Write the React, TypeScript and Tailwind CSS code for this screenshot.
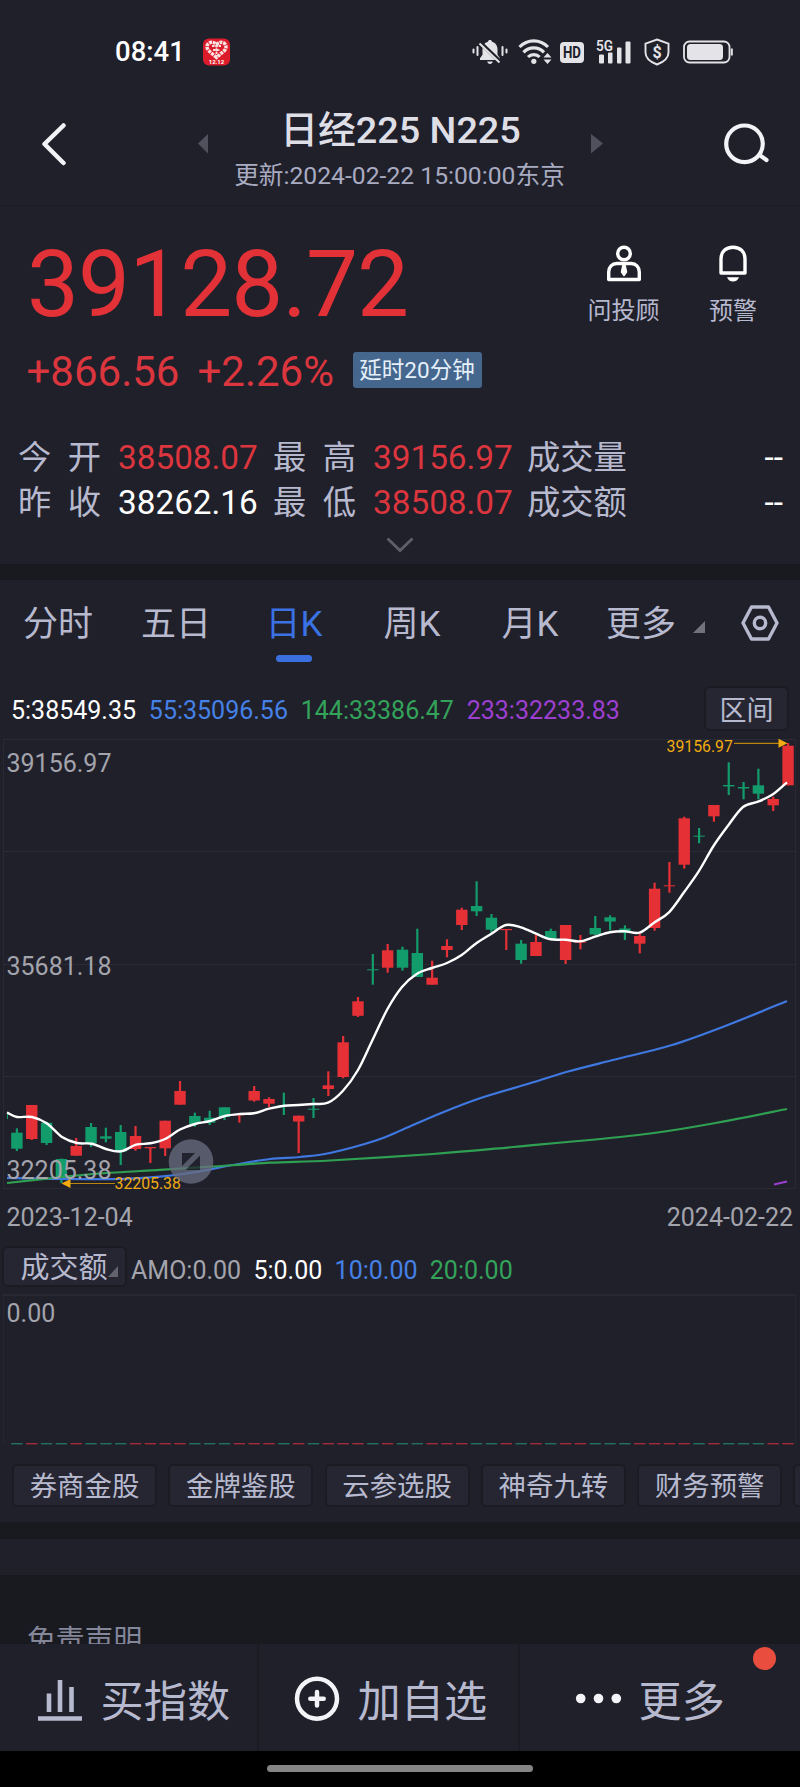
import clsx from 'clsx';

type Candle = [up: boolean, high: number, top: number, bottom: number, low: number];

// up, high, body top, body bottom, low (chart space)
const candles: Candle[] = [
  [false, 1128.3, 1132.7, 1148.7, 1151],
  [true, 1105, 1105, 1139, 1140],
  [false, 1121.7, 1122.7, 1143, 1145],
  [false, 1158.5, 1159, 1179, 1183],
  [true, 1138, 1146, 1155.7, 1155.7],
  [false, 1123, 1127, 1143.3, 1147],
  [false, 1127.7, 1136.3, 1138.7, 1142.3],
  [false, 1125, 1132, 1151.7, 1165],
  [true, 1126, 1136, 1149, 1150.7],
  [true, 1147, 1147, 1148.3, 1163],
  [true, 1120.7, 1120.7, 1148.3, 1156],
  [true, 1081, 1091, 1104.7, 1104.7],
  [false, 1112.7, 1116, 1124, 1126.7],
  [false, 1110.7, 1117.7, 1122.7, 1125],
  [false, 1107.3, 1107.3, 1117, 1120],
  [true, 1114, 1114, 1115.3, 1122.7],
  [true, 1086, 1091, 1100.5, 1101.7],
  [true, 1097.3, 1099, 1103.7, 1107],
  [false, 1092.7, 1105, 1106, 1115],
  [true, 1115.5, 1115.7, 1121.5, 1153],
  [false, 1098, 1108.7, 1109.7, 1118],
  [true, 1071.3, 1085.3, 1089, 1096],
  [true, 1036, 1042.3, 1077, 1078.3],
  [true, 997, 1001.3, 1015.8, 1017],
  [false, 954, 969.3, 970.3, 984.7],
  [true, 944, 950.3, 967.7, 972.7],
  [false, 946.7, 949.7, 967.7, 970.7],
  [false, 928.7, 953, 977, 977],
  [true, 960.7, 977.7, 984.7, 984.7],
  [true, 939.3, 946, 950, 957.3],
  [true, 907.7, 909.7, 925, 930],
  [false, 881.3, 906, 911.3, 916],
  [false, 914, 917.7, 929.7, 932.7],
  [true, 929, 929, 930.2, 950],
  [false, 940, 943.7, 960, 963.7],
  [true, 935, 942, 956, 956],
  [false, 928.7, 931, 939, 940],
  [true, 925, 925, 960, 964],
  [true, 935, 941.7, 942.7, 949.3],
  [false, 916, 928, 934.5, 935],
  [false, 915.3, 917.3, 921.5, 930.3],
  [false, 925.3, 928.5, 932.7, 940],
  [true, 933.3, 936, 943.7, 953.3],
  [true, 882.7, 888.7, 928, 930.7],
  [true, 862, 885.3, 886.3, 892.7],
  [true, 816.7, 818.3, 864.7, 868.7],
  [false, 828, 835.7, 836.7, 843.3],
  [true, 805, 805, 816.3, 821.7],
  [false, 762.3, 785, 786.4, 795],
  [false, 782, 787, 788.5, 799.3],
  [false, 768.7, 785.3, 793.7, 799.3],
  [true, 796.7, 799, 805.3, 811],
  [true, 743, 745.7, 785.3, 785.3],
];

const candleX = (i: number) => 16.9 + i * 14.83;

const ma5: number[][] = [
  [7, 1112.5], [17, 1117], [32, 1117], [47, 1123.5], [62, 1137], [77, 1143], [92, 1143.7], [106, 1149],
  [121, 1151.3], [136, 1144.7], [150.5, 1143.3], [165, 1139], [180, 1129.5], [195, 1124], [210, 1121],
  [225, 1116], [240, 1114], [254, 1113.3], [269, 1108.7], [284, 1105.7], [298.5, 1105], [313, 1104],
  [328, 1102.7], [343, 1090.7], [358, 1070], [372.5, 1040], [387.5, 1009], [402, 987], [417, 973.7],
  [432, 968], [447, 963], [461.7, 955], [476, 943.5], [491, 934], [506, 925], [521, 927.3], [536, 933.7],
  [550.5, 939.3], [565.5, 939.7], [580, 941.3], [595, 936.7], [610, 932.3], [624.5, 931.3], [639.5, 932.7],
  [654, 922.7], [669, 912.3], [684, 892.3], [698.5, 871.7], [713.5, 846], [728, 825.7], [743, 807],
  [758, 801.7], [773, 794.3], [787, 782.3],
];

const ma55: number[][] = [
  [7, 1178], [62, 1179], [120, 1179], [160, 1176.7], [193, 1172.5], [233, 1165], [270, 1159], [300, 1157],
  [330, 1153], [376, 1140.5], [403, 1129.5], [440, 1113.5], [480, 1098.3], [530, 1083.3], [570, 1071],
  [615, 1059.5], [672, 1045], [729, 1024.5], [787, 1001],
];

const ma144: number[][] = [
  [7, 1183], [62, 1177], [100, 1173.5], [160, 1169.8], [210, 1166.7], [270, 1162.7], [330, 1160.5],
  [433, 1154], [513, 1147], [638, 1135], [707, 1124.5], [787, 1109],
];

// Catmull-Rom through the points
function smooth(p: number[][]) {
  let d = `M${p[0][0]} ${p[0][1]}`;
  for (let i = 0; i < p.length - 1; i++) {
    const a = p[i - 1] ?? p[i];
    const b = p[i];
    const c = p[i + 1];
    const e = p[i + 2] ?? c;
    d += `C${b[0] + (c[0] - a[0]) / 6} ${b[1] + (c[1] - a[1]) / 6} ${c[0] - (e[0] - b[0]) / 6} ${c[1] - (e[1] - b[1]) / 6} ${c[0]} ${c[1]}`;
  }
  return d;
}

function StatusBar() {
  return (
    <div className="flex h-[102px] items-center pl-[115px] pt-[2px] text-[#e4e4e8]">
      <span className="w-[88px] text-[27.5px] font-medium leading-[40px] text-white">08:41</span>
      <svg width="27" height="28" viewBox="0 0 27 28">
        <rect y="0.5" width="27" height="27" rx="6" fill="#dc1c2a" />
        <path
          d="M13.500 19.500 L5.500 12.500 Q2.500 8.500 5.500 5.500 Q9 2.500 13.500 6.500 Q18 2.500 21.500 5.500 Q24.500 8.500 21.500 12.500 Z"
          fill="none"
          stroke="#fbe3e3"
          strokeWidth="3.500"
          strokeDasharray="3 0.8"
        />
        <path d="M9 8h9M10 12h7M13.500 7v11" stroke="#fbe3e3" strokeWidth="1.800" strokeDasharray="2.500 0.8" />
        <text x="13.500" y="25.500" textAnchor="middle" fontSize="6" fontWeight="700" fill="#fff">12.12</text>
      </svg>

      {/* muted bell */}
      <svg className="ml-[242px]" width="36" height="28" viewBox="0 0 36 28" fill="currentColor">
        <path d="M18 2c1.200 0 1.800.7 2 1.700 3.400 1 5.500 3.800 5.500 7.500v5.500l2.500 3.600v1.700H8v-1.700l2.500-3.600v-5.500c0-3.700 2.100-6.500 5.500-7.500.2-1 .8-1.700 2-1.700z" />
        <path d="M15.200 23.500h5.600c-.3 1.500-1.400 2.500-2.800 2.500s-2.500-1-2.800-2.500z" />
        <path d="M7 3.500l22 21" stroke="#20202b" strokeWidth="4" />
        <path d="M7.500 5.500l20 19" stroke="currentColor" strokeWidth="2" />
        <path d="M1.500 11.500v3M5.500 9v8M30.500 9v8M34.500 11.500v3" stroke="currentColor" strokeWidth="2" strokeLinecap="round" />
      </svg>

      {/* wifi */}
      <svg className="ml-[10px]" width="34" height="28" viewBox="0 0 34 28" fill="none" stroke="currentColor" strokeWidth="3.200">
        <path d="M1.500 9C9.500 .8 22 .8 30 9" />
        <path d="M5.500 14.300c5.500-6 15-6 20.500 0" />
        <path d="M10 19c3.200-3.300 8.400-3.300 11.600 0" />
        <circle cx="15.800" cy="23.300" r="2.600" fill="currentColor" stroke="none" />
        <path d="M25.500 19.500l4-4.500 4 4.500zM25.500 21.500l4 4.500 4-4.500z" fill="currentColor" stroke="none" />
      </svg>

      <span className="ml-[8px] flex h-[21px] w-6 items-center justify-center rounded-[4px] bg-[#e4e4e8]">
        <svg className="overflow-visible" width="24" height="21" viewBox="0 0 24 21">
          <text x="3" y="16.300" textLength="18" lengthAdjust="spacingAndGlyphs" fontSize="16.500" fontWeight="700" fill="#20202b">HD</text>
        </svg>
      </span>

      {/* 5G signal */}
      <svg className="ml-[12px]" width="36" height="28" viewBox="0 0 36 28" fill="currentColor">
        <text x="0" y="12.800" fontSize="15.500" fontWeight="600" textLength="17" lengthAdjust="spacingAndGlyphs">5G</text>
        <rect x="3" y="16.500" width="5" height="9" rx="1" />
        <rect x="12" y="14.500" width="4.500" height="11" rx="1" />
        <rect x="21" y="9.500" width="4.500" height="16" rx="1" />
        <rect x="29.500" y="3.500" width="5" height="22" rx="1" />
      </svg>

      {/* shield */}
      <svg className="ml-[12px]" width="26" height="28" viewBox="0 0 26 28" fill="none" stroke="currentColor" strokeWidth="1.900">
        <path d="M13 1.500l11.500 4.200v8.800c0 5.500-4.800 9.500-11.500 12-6.700-2.500-11.500-6.500-11.500-12V5.700z" />
        <text x="13" y="19.500" textAnchor="middle" fontSize="16" fontWeight="700" fill="currentColor" stroke="none">$</text>
      </svg>

      {/* battery */}
      <svg className="ml-[13px]" width="50" height="24" viewBox="0 0 50 24" fill="none">
        <rect x="1" y="1.500" width="45.500" height="21" rx="5.500" stroke="currentColor" strokeWidth="1.800" />
        <rect x="4" y="4" width="36" height="16" rx="3.500" fill="currentColor" />
        <path d="M48.800 8.500v7" stroke="currentColor" strokeWidth="2" />
      </svg>
    </div>
  );
}

function Header() {
  return (
    <header className="flex h-[104px] items-start border-b border-[#1c1c26]">
      <svg className="ml-[41px] mt-5" width="26" height="44" viewBox="0 0 26 44" fill="none" stroke="#f2f2f7" strokeWidth="4.500" strokeLinecap="round" strokeLinejoin="round">
        <path d="M22.500 3.500L3.500 22l19 19" />
      </svg>
      <svg className="ml-[131px] mt-8" width="10" height="20" viewBox="0 0 10 20">
        <path d="M0 9.500L10 0v19.500z" fill="#50515d" />
      </svg>
      <div className="flex-1 text-center">
        <h1 className="ml-[2px] mt-[6px] text-[37.800px] font-medium leading-[44px] text-[#dedee6]">日经225 N225</h1>
        <p className="mt-[2px] text-[24.700px] leading-[44px] text-[#a9abc0]">更新:2024-02-22 15:00:00东京</p>
      </div>
      <svg className="mt-8" width="12" height="20" viewBox="0 0 12 20">
        <path d="M12 9.500L0 0v19.500z" fill="#50515d" />
      </svg>
      <svg className="ml-[120px] mr-[29px] mt-5" width="48" height="44" viewBox="0 0 48 44" fill="none" stroke="#f2f2f7" strokeWidth="4.200" strokeLinecap="round">
        <circle cx="21.500" cy="21.800" r="18.300" />
        <path d="M36.500 33l7 5" />
      </svg>
    </header>
  );
}

function Quote({ label, value, tone }: { label: string; value: string; tone: string }) {
  return (
    <div className="flex">
      <div className="mr-[17px] flex w-[83px] justify-between text-[#b7b9ce]">
        <span>{label[0]}</span>
        <span>{label[1]}</span>
      </div>
      <span className={tone}>{value}</span>
    </div>
  );
}

function Summary() {
  return (
    <section className="h-[358px] pt-[33px]">
      <div className="flex justify-between">
        <div>
          <div className="ml-[27px] text-[92.500px] leading-[92px] tracking-[-0.9px] text-[#e23137]">39128.72</div>
          <div className="mt-[21px] flex h-10 items-start pl-[26.500px] text-[42px] leading-10 text-[#db353e]">
            <span className="w-[171px]">+866.56</span>
            <span className="w-[155px]">+2.26%</span>
            <span className="flex h-9 w-[129px] items-center justify-center rounded-[3px] bg-[#45678d] text-[22.500px] leading-9 text-[#e6f0fb]">
              延时20分钟
            </span>
          </div>
        </div>
        <div className="flex pr-[43px] pt-[4px] text-[24px] leading-8 text-[#b7b9ce]">
          <div className="flex w-[73px] flex-col items-center">
            <svg width="36" height="40" viewBox="0 0 36 40" fill="none" stroke="#fff" strokeWidth="3.400" strokeLinejoin="round">
              <circle cx="18" cy="10.500" r="6.300" />
              <path d="M2.700 36.500V29c0-5 3.500-8.500 8-8.500h14.600c4.500 0 8 3.500 8 8.500v7.500z" />
              <path d="M17 22l-1.500 7 2.500 3.500 2.500-3.500-1.500-7z" fill="#fff" strokeWidth="1.500" />
            </svg>
            <span className="mt-[12px] whitespace-nowrap">问投顾</span>
          </div>
          <div className="ml-[49px] flex w-[48px] flex-col items-center">
            <svg width="30" height="40" viewBox="0 0 30 40" fill="none" stroke="#fff" strokeWidth="3.400" strokeLinejoin="round">
              <path d="M3 30V16C3 8.500 8 4.200 15 4.200S27 8.500 27 16v14z" />
              <path d="M9 34.200h12c-1 2.800-3.200 4.300-6 4.300s-5-1.500-6-4.300z" fill="#fff" stroke="none" />
            </svg>
            <span className="mt-[12px] whitespace-nowrap">预警</span>
          </div>
        </div>
      </div>

      <div className="mt-[43px] grid grid-cols-[255px_254px_1fr] pl-[18px] pr-[17px] text-[33.300px] leading-[45px]">
        <Quote label="今开" value="38508.07" tone="text-[#db353e]" />
        <Quote label="最高" value="39156.97" tone="text-[#db353e]" />
        <div className="flex justify-between text-[#b7b9ce]">
          成交量<span className="text-white">--</span>
        </div>
        <Quote label="昨收" value="38262.16" tone="text-white" />
        <Quote label="最低" value="38508.07" tone="text-[#db353e]" />
        <div className="flex justify-between text-[#b7b9ce]">
          成交额<span className="text-white">--</span>
        </div>
      </div>
      <svg className="mx-auto mt-[12px]" width="30" height="17" viewBox="0 0 30 17" fill="none" stroke="#5e5f6a" strokeWidth="2.800">
        <path d="M2.500 1.500L15 13.500l12.500-12" />
      </svg>
    </section>
  );
}

function Tabs() {
  return (
    <nav className="flex h-[86px] items-center text-[35px] leading-[50px] text-[#b7b9ce]">
      {['分时', '五日', '日K', '周K', '月K'].map((tab) => (
        <div key={tab} className={clsx('relative w-[118px] pr-[2px] pt-[3px] text-center', tab === '日K' && 'text-[#3a72e4]')}>
          {tab}
          {tab === '日K' && <span className="absolute -bottom-[12px] left-[40px] h-[7px] w-[36px] rounded-full bg-[#3a6fe0]" />}
        </div>
      ))}
      <div className="w-[103px] pr-[1px] pt-[3px] text-center">更多</div>
      <svg className="mt-2" width="12" height="12" viewBox="0 0 12 12">
        <path d="M12 0v12H0z" fill="#71727c" />
      </svg>
      <svg className="ml-[36px]" width="38" height="36" viewBox="0 0 38 36" fill="none" stroke="#b7b9ce" strokeWidth="3.400" strokeLinejoin="round">
        <path d="M10.500 2h17L36 18l-8.500 16h-17L2 18z" />
        <circle cx="19" cy="18" r="5.700" />
      </svg>
    </nav>
  );
}

function PriceChart() {
  return (
    <svg className="block overflow-visible" width="800" height="451" viewBox="0 739 800 451" fill="none">
      {[739.5, 851.5, 964.5, 1076.500, 1188.5].map((y) => (
        <path key={y} d={`M3 ${y}H795`} stroke="#2b2b37" />
      ))}
      <path d="M3.500 739V1188M795.500 739V1188" stroke="#292934" />

      <path d="M7.500 1113V1119" stroke="#139c6b" strokeWidth="1" />
      {candles.map(([up, high, top, bottom, low], i) => (
        <g key={i} fill={up ? '#e53036' : '#139c6b'}>
          <rect x={candleX(i) - 1.1} y={high} width="2.200" height={low - high} />
          <rect x={candleX(i) - 5.7} y={top} width="11.400" height={bottom - top} />
        </g>
      ))}

      <path d={smooth(ma55)} stroke="#3f78e0" strokeWidth="2.200" />
      <path d={smooth(ma144)} stroke="#2fa052" strokeWidth="2.200" />
      <path d="M774 1184.500L787 1181.500" stroke="#9b3fd0" strokeWidth="2" />
      <path d={smooth(ma5)} stroke="#fff" strokeWidth="2.400" />

      <g fill="#a3a4ac" fontSize="25">
        <text x="6.500" y="771.500">39156.97</text>
        <text x="6.500" y="974.500">35681.18</text>
        <text x="6.500" y="1178.500">32205.38</text>
      </g>

      <g fill="#f2ac10" stroke="none" fontSize="15.800">
        <text x="666.500" y="752">39156.97</text>
        <path d="M734 743.300h45" stroke="#b98410" strokeWidth="1.200" />
        <path d="M778.500 738.800l9 4.500-9 4.500z" />
        <text x="114.500" y="1189.300">32205.38</text>
        <path d="M70 1183.500h45" stroke="#b98410" strokeWidth="1.200" />
        <path d="M70.500 1179l-9 4.500 9 4.500z" />
      </g>

      <g opacity="0.75">
        <circle cx="191" cy="1161.500" r="22.300" fill="#6a6e80" />
        <path d="M182 1153h13l-13 13zM200 1155.500v14.500h-14.500z" fill="#22232e" />
      </g>
    </svg>
  );
}

function VolumeChart() {
  return (
    <svg className="block" width="800" height="164" viewBox="0 1286 800 164" fill="none">
      <path d="M3 1295H795" stroke="#2b2b37" strokeWidth="1.500" />
      <path d="M3.500 1295V1444M795.500 1295V1444" stroke="#272732" />
      <text x="6.500" y="1321.500" fontSize="25" fill="#a3a4ac">0.00</text>
      {candles.map(([up], i) => (
        <rect key={i} x={candleX(i) - 5.7} y="1443" width="11.400" height="1.400" fill={up ? '#a12c3a' : '#24705f'} />
      ))}
    </svg>
  );
}

function ChartPanel() {
  return (
    <section className="h-[942px]">
      <Tabs />
      <div className="flex h-[73px] items-start pl-[11px] pr-[11px] pt-[20px] text-[25px] leading-[50px]">
        <div className="flex flex-1 gap-[12.800px]">
          <span className="text-white">5:38549.35</span>
          <span className="text-[#4581e6]">55:35096.56</span>
          <span className="text-[#34a35a]">144:33386.47</span>
          <span className="text-[#9d3fd0]">233:32233.83</span>
        </div>
        <button className="h-[45px] w-[85px] rounded-[6px] border-2 border-[#1b1b24] bg-[#252632] pt-[3px] text-[27px] leading-[41px] text-[#b7b9ce]">
          区间
        </button>
      </div>
      <PriceChart />
      <div className="flex h-[54px] items-center justify-between pl-[6.500px] pr-[7px] pt-[2px] text-[25px] text-[#a3a4ac]">
        <span>2023-12-04</span>
        <span>2024-02-22</span>
      </div>
      <div className="flex h-[42px] items-start pl-[2px] pt-[2px] text-[25px] leading-[50px]">
        <button className="flex h-[41px] w-[125px] items-center rounded-[6px] border-2 border-[#1b1b24] bg-[#252632] pl-[16.500px] pt-[3px] text-[29px] leading-[36px] text-[#b7b9ce]">
          成交额
          <svg className="mt-[7px]" width="10" height="11" viewBox="0 0 10 11">
            <path d="M10 0v11H0z" fill="#62636d" />
          </svg>
        </button>
        <div className="ml-[4px] flex gap-[12.300px]">
          <span className="text-[#a3a4ac]">AMO:0.00</span>
          <span className="text-white">5:0.00</span>
          <span className="text-[#4581e6]">10:0.00</span>
          <span className="text-[#34a35a]">20:0.00</span>
        </div>
      </div>
      <VolumeChart />
      <div className="mt-[14px] flex gap-[11.300px] overflow-hidden pl-[12px]">
        {['券商金股', '金牌鉴股', '云参选股', '神奇九转', '财务预警', ''].map((item) => (
          <button
            key={item}
            className="h-[43px] w-[145px] shrink-0 rounded-[5px] border-2 border-[#1b1b24] bg-[#252632] pt-[2px] text-[27.400px] leading-[39px] text-[#b7b9ce]"
          >
            {item}
          </button>
        ))}
      </div>
    </section>
  );
}

function BottomBar() {
  return (
    <footer>
      <div className="flex h-[107px] items-start bg-[#20202b] text-[43.200px] leading-[62px] text-[#b7b9ce]">
        <div className="flex h-full w-[259px] border-r-2 border-[#1b1b24] pl-[37px] pt-7">
          <svg className="mt-2" width="46" height="42" viewBox="0 0 46 42" stroke="#b7b9ce" strokeWidth="4.600">
            <path d="M12 13.500V32M23 0V32M34.500 7V32M1 38.500H45" />
          </svg>
          <span className="ml-[17.500px]">买指数</span>
        </div>
        <div className="flex h-full w-[261px] border-r-2 border-[#1b1b24] pl-[35px] pt-7">
          <svg className="mt-[4px]" width="46" height="46" viewBox="0 0 46 46" fill="none" stroke="#f3f3f8" strokeWidth="4.500" strokeLinecap="round">
            <circle cx="23" cy="22.700" r="20" />
            <path d="M16.300 22.700h13.400M23 16v13.400" />
          </svg>
          <span className="ml-[17.500px]">加自选</span>
        </div>
        <div className="relative flex h-full flex-1 pl-[55px] pt-7">
          <svg className="mt-[21px]" width="48" height="12" viewBox="0 0 48 12" fill="#f3f3f8">
            <circle cx="5.700" cy="5.500" r="4.800" />
            <circle cx="23.500" cy="5.500" r="4.800" />
            <circle cx="41.300" cy="5.500" r="4.800" />
          </svg>
          <span className="ml-[15.500px]">更多</span>
          <span className="absolute left-[233px] top-[3px] size-[23px] rounded-full bg-[#e94d3e]" />
        </div>
      </div>
      <div className="flex h-9 justify-center bg-black pt-[14px]">
        <div className="h-[7px] w-[266px] rounded-full bg-[#858585]" />
      </div>
    </footer>
  );
}

export default function App() {
  return (
    <div className="h-[1787px] w-[800px] overflow-hidden bg-[#191920] font-['Roboto','Noto_Sans_CJK_SC',sans-serif]">
      <div className="bg-[#20202b]">
        <StatusBar />
        <Header />
        <Summary />
      </div>
      <div className="h-4" />
      <div className="bg-[#20202b]">
        <ChartPanel />
      </div>
      <div className="mt-[17px] h-[36px] bg-[#20202b]" />

      {/* Disclaimer, cut off by the bottom bar */}
      <div className="h-[69px] overflow-hidden pl-[27px] pt-[45px] text-[28.800px] leading-[40px] text-[#84869a]">免责声明</div>
      <BottomBar />
    </div>
  );
}
